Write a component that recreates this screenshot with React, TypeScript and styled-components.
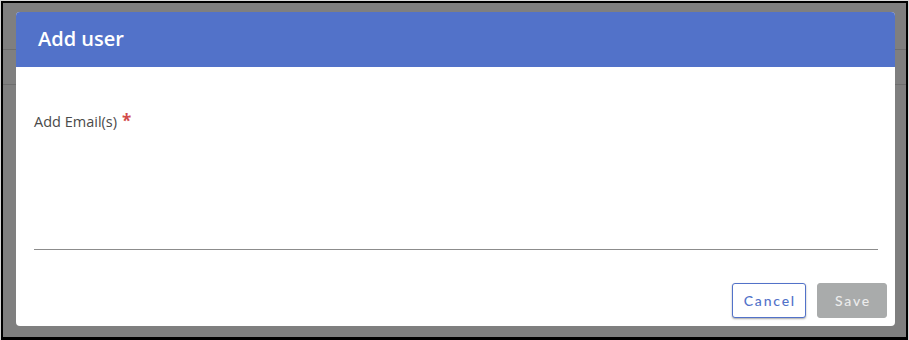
import { FC } from "react";
import styled, { createGlobalStyle } from "styled-components";

const GlobalStyle = createGlobalStyle`
  html, body {
    margin: 0;
    padding: 0;
    background-color: #d9d9d9;
  }
  * {
    box-sizing: border-box;
  }
`;

const Frame = styled.div`
  position: relative;
  margin: 1px 1px 0 1px;
  height: 339px;
  border: 2px solid #000;
  border-bottom-width: 3px;
  background-color: #ffffff;
  overflow: hidden;
`;

const PageRow = styled.div<{ $height: number }>`
  height: ${(p) => p.$height}px;
  border-bottom: 1px solid #dcdcdc;
`;

const Backdrop = styled.div`
  position: absolute;
  inset: 0;
  background-color: rgba(0, 0, 0, 0.5);
  display: flex;
  align-items: flex-start;
  padding: 9px 11px 0 13px;
`;

const Dialog = styled.div`
  width: 879px;
  height: 314px;
  background-color: #fff;
  border-radius: 4px;
  overflow: hidden;
  display: flex;
  flex-direction: column;
`;

const DialogHeader = styled.div`
  height: 55px;
  flex: 0 0 55px;
  background-color: #5272c9;
  display: flex;
  align-items: center;
  padding: 0 22px 2px;
`;

const DialogTitle = styled.h2`
  margin: 0;
  font-family: "Open Sans", "Noto Sans", sans-serif;
  font-size: 20px;
  font-weight: 600;
  color: #fff;
`;

const DialogBody = styled.div`
  flex: 1;
  padding: 45px 17px 0 18px;
`;

const FieldLabel = styled.label`
  display: block;
  font-family: "Open Sans", "Noto Sans", sans-serif;
  font-size: 14.5px;
  line-height: 20px;
  color: #4a4a4a;
`;

const Required = styled.span`
  color: #d24b4b;
  font-size: 17px;
  font-weight: 700;
  line-height: 14px;
  margin-left: 5px;
`;

const EmailInput = styled.textarea`
  display: block;
  width: 100%;
  height: 118px;
  margin-top: 0;
  border: none;
  border-bottom: 1px solid #8c8c8c;
  resize: none;
  outline: none;
  background: transparent;
  font-family: "Open Sans", "Noto Sans", sans-serif;
  font-size: 14px;
`;

const DialogFooter = styled.div`
  display: flex;
  justify-content: flex-end;
  gap: 11px;
  padding: 0 8px 8px;
`;

const Button = styled.button<{ $primary?: boolean }>`
  height: 35px;
  min-width: 70px;
  padding: 0 9px 0 11px;
  border-radius: 3px;
  font-family: Lato, "Liberation Sans", sans-serif;
  font-size: 14px;
  font-weight: 500;
  letter-spacing: 1.8px;
  cursor: pointer;
  border: 1px solid ${(p) => (p.$primary ? "#a9abab" : "#5272c9")};
  background-color: ${(p) => (p.$primary ? "#a9abab" : "#fff")};
  color: ${(p) => (p.$primary ? "#ececec" : "#5272c9")};
  box-shadow: ${(p) => (p.$primary ? "none" : "0 1px 2px rgba(0, 0, 0, 0.35)")};
`;

const App: FC = () => {
  return (
    <>
      <GlobalStyle />
      <Frame>
        <PageRow $height={47} />
        <PageRow $height={35} />
        <Backdrop>
          <Dialog role="dialog">
            <DialogHeader>
              <DialogTitle>Add user</DialogTitle>
            </DialogHeader>
            <DialogBody>
              <FieldLabel htmlFor="emails">
                Add Email(s)
                <Required>*</Required>
              </FieldLabel>
              <EmailInput id="emails" />
            </DialogBody>
            <DialogFooter>
              <Button>Cancel</Button>
              <Button $primary disabled>
                Save
              </Button>
            </DialogFooter>
          </Dialog>
        </Backdrop>
      </Frame>
    </>
  );
};

export default App;
